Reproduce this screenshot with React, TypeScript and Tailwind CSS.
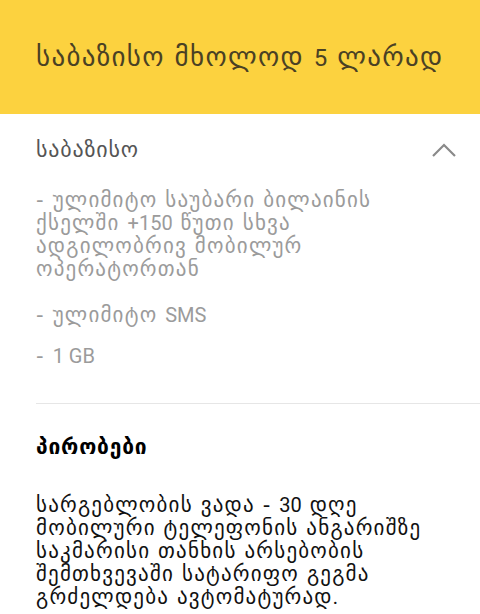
import { useState } from 'react';

// Georgian glyphs from DejaVu run narrow, so Georgian gets tracking and Latin runs keep Roboto at their own size
const Mixed = ({ text, latin = 'text-[20px]' }: { text: string; latin?: string }) => (
  <>
    {text.split(/([A-Za-z0-9+.]+(?: [A-Za-z0-9+.]+)*)/).map((part, i) =>
      i % 2 === 1 ? (
        <span key={i} className={`font-['Roboto',sans-serif] tracking-normal ${latin}`}>
          {part}
        </span>
      ) : (
        part
      )
    )}
  </>
);

const Chevron = ({ open }: { open: boolean }) => (
  <svg width="26" height="16" viewBox="0 0 26 16" className={open ? '' : 'rotate-180'}>
    <path d="M2 14 L13 3 L24 14" fill="none" stroke="#8a8a8a" strokeWidth="2.2" />
  </svg>
);

const conditions = [
  'სარგებლობის ვადა - 30 დღე',
  'მობილური ტელეფონის ანგარიშზე',
  'საკმარისი თანხის არსებობის',
  'შემთხვევაში სატარიფო გეგმა',
  'გრძელდება ავტომატურად.',
];

export default function App() {
  const [open, setOpen] = useState(true);

  return (
    <div className="w-[480px] h-[614px] overflow-hidden bg-white font-['DejaVu_Sans',sans-serif]">
      <div className="h-[114px] bg-[#fcd23f] flex items-center pl-9 pr-4">
        <h1 className="whitespace-nowrap text-[27px] leading-[34px] tracking-[1.3px] text-[#4a4124]">
          <Mixed text="საბაზისო მხოლოდ 5 ლარად" latin="text-[24px]" />
        </h1>
      </div>

      <div className="pl-9">
        <button
          className="w-full flex items-center justify-between pt-[22px] pr-[23px] text-left"
          onClick={() => setOpen(!open)}
        >
          <span className="text-[22px] leading-[28px] tracking-[0.8px] text-[#555]">საბაზისო</span>
          <Chevron open={open} />
        </button>

        {open && (
          <div className="pt-[25px] text-[21px] leading-[23px] tracking-[1.2px] text-[#9b9b9b]">
            <p>
              - ულიმიტო საუბარი ბილაინის
              <br />
              ქსელში <Mixed text="+150" /> წუთი სხვა
              <br />
              ადგილობრივ მობილურ
              <br />
              ოპერატორთან
            </p>
            <p className="mt-[23px]">
              - ულიმიტო <Mixed text="SMS" />
            </p>
            <p className="mt-[18px]">
              <Mixed text="- 1 GB" />
            </p>
          </div>
        )}

        <div className="mt-[35px] h-px bg-[#e6e6e6]" />

        <h2 className="pt-[29px] text-[21px] leading-[28px] tracking-[0.8px] font-bold text-black">პირობები</h2>

        <p className="pt-[33px] text-[21px] leading-[23px] tracking-[1.2px] text-[#111]">
          {conditions.map((line) => (
            <span key={line} className="block">
              <Mixed text={line} />
            </span>
          ))}
        </p>
      </div>
    </div>
  );
}
